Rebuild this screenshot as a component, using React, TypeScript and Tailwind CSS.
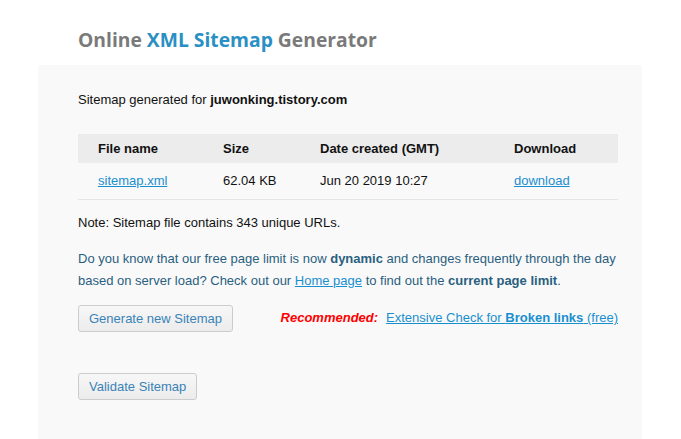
import React from 'react';

const rows = [
  { name: 'sitemap.xml', size: '62.04 KB', date: 'Jun 20 2019 10:27' },
];

const btn =
  'h-[27px] px-[10px] rounded-[3px] border border-[#cccccc] bg-gradient-to-b from-[#f7f7f7] to-[#ececec] text-[#3a83b8] text-[13px] leading-none';

export default function App() {
  return (
    <div className="min-h-[439px] bg-white font-['Liberation_Sans',Arial,sans-serif] text-[13px] text-[#111]">
      <div className="ml-[38px] w-[604px]">
        <h1 className="h-[65px] pl-[40px] pt-[28px] font-['Open_Sans',sans-serif] text-[19.3px] font-bold leading-[24px] text-[#7a7a7a]">
          Online <span className="text-[#2a8fc4]">XML Sitemap</span> Generator
        </h1>
        <div className="min-h-[374px] bg-[#f9f9f9] pl-[40px] pr-[24px] pt-[27px]">
          <p className="leading-[16px]">
            Sitemap generated for <b>juwonking.tistory.com</b>
          </p>

          <table className="mt-[26px] w-full table-fixed border-collapse text-left">
            <thead>
              <tr className="h-[29px] bg-[#ececec]">
                <th className="w-[145px] pl-[20px] font-bold">File name</th>
                <th className="w-[97px] font-bold">Size</th>
                <th className="w-[194px] font-bold">Date created (GMT)</th>
                <th className="font-bold">Download</th>
              </tr>
            </thead>
            <tbody>
              {rows.map((r) => (
                <tr key={r.name} className="h-[36px] border-b border-[#e4e4e4]">
                  <td className="pl-[20px]">
                    <a href="#" className="text-[#1a8fd0] underline">{r.name}</a>
                  </td>
                  <td>{r.size}</td>
                  <td>{r.date}</td>
                  <td>
                    <a href="#" className="text-[#1a8fd0] underline">download</a>
                  </td>
                </tr>
              ))}
            </tbody>
          </table>

          <p className="mt-[15px] leading-[16px]">Note: Sitemap file contains 343 unique URLs.</p>

          <p className="mt-[17px] mr-[-12px] leading-[22px] text-[#2a5f80]">
            Do you know that our free page limit is now <b>dynamic</b> and changes frequently through the day
            based on server load? Check out our{' '}
            <a href="#" className="text-[#1a8fd0] underline">Home page</a> to find out the <b>current page limit</b>.
          </p>

          <div className="mt-[13px] flex items-center justify-between">
            <button className={btn}>Generate new Sitemap</button>
            <div className="flex items-center gap-[8px]">
              <span className="font-bold italic text-[#ff0000]">Recommended:</span>
              <a href="#" className="text-[#1a8fd0] underline">
                Extensive Check for <b>Broken links</b> (free)
              </a>
            </div>
          </div>

          <div className="mt-[41px]">
            <button className={btn}>Validate Sitemap</button>
          </div>
        </div>
      </div>
    </div>
  );
}
